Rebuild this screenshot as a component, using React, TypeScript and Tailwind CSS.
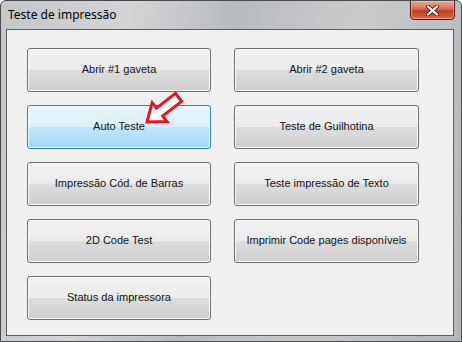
const buttons = [
  { label: 'Abrir #1 gaveta' },
  { label: 'Abrir #2 gaveta' },
  { label: 'Auto Teste', hot: true },
  { label: 'Teste de Guilhotina' },
  { label: 'Impressão Cód. de Barras' },
  { label: 'Teste impressão de Texto' },
  { label: '2D Code Test' },
  { label: 'Imprimir Code pages disponíveis' },
  { label: 'Status da impressora' },
]

function WinButton({ label, hot }: { label: string; hot?: boolean }) {
  return (
    <button
      type="button"
      className={
        hot
          ? 'h-[44px] pb-px rounded-[3px] border border-[#3c7fb1] bg-[linear-gradient(to_bottom,#eaf6fd_0%,#d9f0fc_50%,#bee6fd_50%,#a7d9f5_100%)] shadow-[inset_0_0_0_1px_#f4fbff] text-[11px] text-[#111]'
          : 'h-[44px] pb-px rounded-[3px] border border-[#707070] bg-[linear-gradient(to_bottom,#f2f2f2_0%,#ebebeb_50%,#dddddd_50%,#cfcfcf_100%)] shadow-[inset_0_0_0_1px_#fafafa] text-[11px] text-[#111]'
      }
      style={{ fontFamily: '"Liberation Sans", Arial, sans-serif' }}
    >
      {label}
    </button>
  )
}

export default function App() {
  return (
    <div className="relative w-[462px] h-[342px] overflow-hidden rounded-t-[6px] border border-[#4a4a4a] bg-[linear-gradient(100deg,#c4c7ca_0%,#d2d4d6_25%,#b9bcbf_45%,#c8cacc_70%,#b4b7ba_100%)] flex flex-col">
      {/* Title bar */}
      <div className="h-[28px] flex items-center pl-[7px] relative">
        <span
          className="text-[12px] text-black"
          style={{ fontFamily: '"Noto Sans", "Open Sans", sans-serif' }}
        >
          Teste de impressão
        </span>
        <div className="absolute left-[409px] top-[-1px] w-[45px] h-[20px] rounded-b-[4px] border border-[#4f1a10] bg-[linear-gradient(to_bottom,#e9a99b_0%,#d46a55_45%,#c23a22_55%,#d66b52_100%)] shadow-[inset_0_0_0_1px_rgba(255,210,200,0.5)] flex items-center justify-center">
          <svg width="13" height="11" viewBox="0 0 13 11">
            <path d="M2 1.5 L11 9.5 M11 1.5 L2 9.5" stroke="#5a2418" strokeWidth="4" strokeLinecap="round" />
            <path d="M2 1.5 L11 9.5 M11 1.5 L2 9.5" stroke="#ffffff" strokeWidth="2.2" strokeLinecap="round" />
          </svg>
        </div>
      </div>

      {/* Client area */}
      <div className="ml-[5px] mr-[7px] mb-[5px] flex-1 border border-[#5c5c5c] bg-[#f0f0f0] pl-[20px] pt-[18px]">
        <div className="grid grid-cols-[184px_185px] gap-x-[23px] gap-y-[13px]">
          {buttons.map((b) => (
            <WinButton key={b.label} label={b.label} hot={b.hot} />
          ))}
        </div>
      </div>

      {/* Red arrow annotation */}
      <svg className="absolute left-0 top-0 pointer-events-none" width="462" height="342">
        <g transform="translate(146,121) rotate(142) translate(-40,0)">
          <polygon
            points="0,-5 24,-5 24,-12 40,0 24,12 24,5 0,5"
            fill="#ffffff"
            stroke="#e8141a"
            strokeWidth="3"
            strokeLinejoin="miter"
          />
        </g>
      </svg>
    </div>
  )
}
